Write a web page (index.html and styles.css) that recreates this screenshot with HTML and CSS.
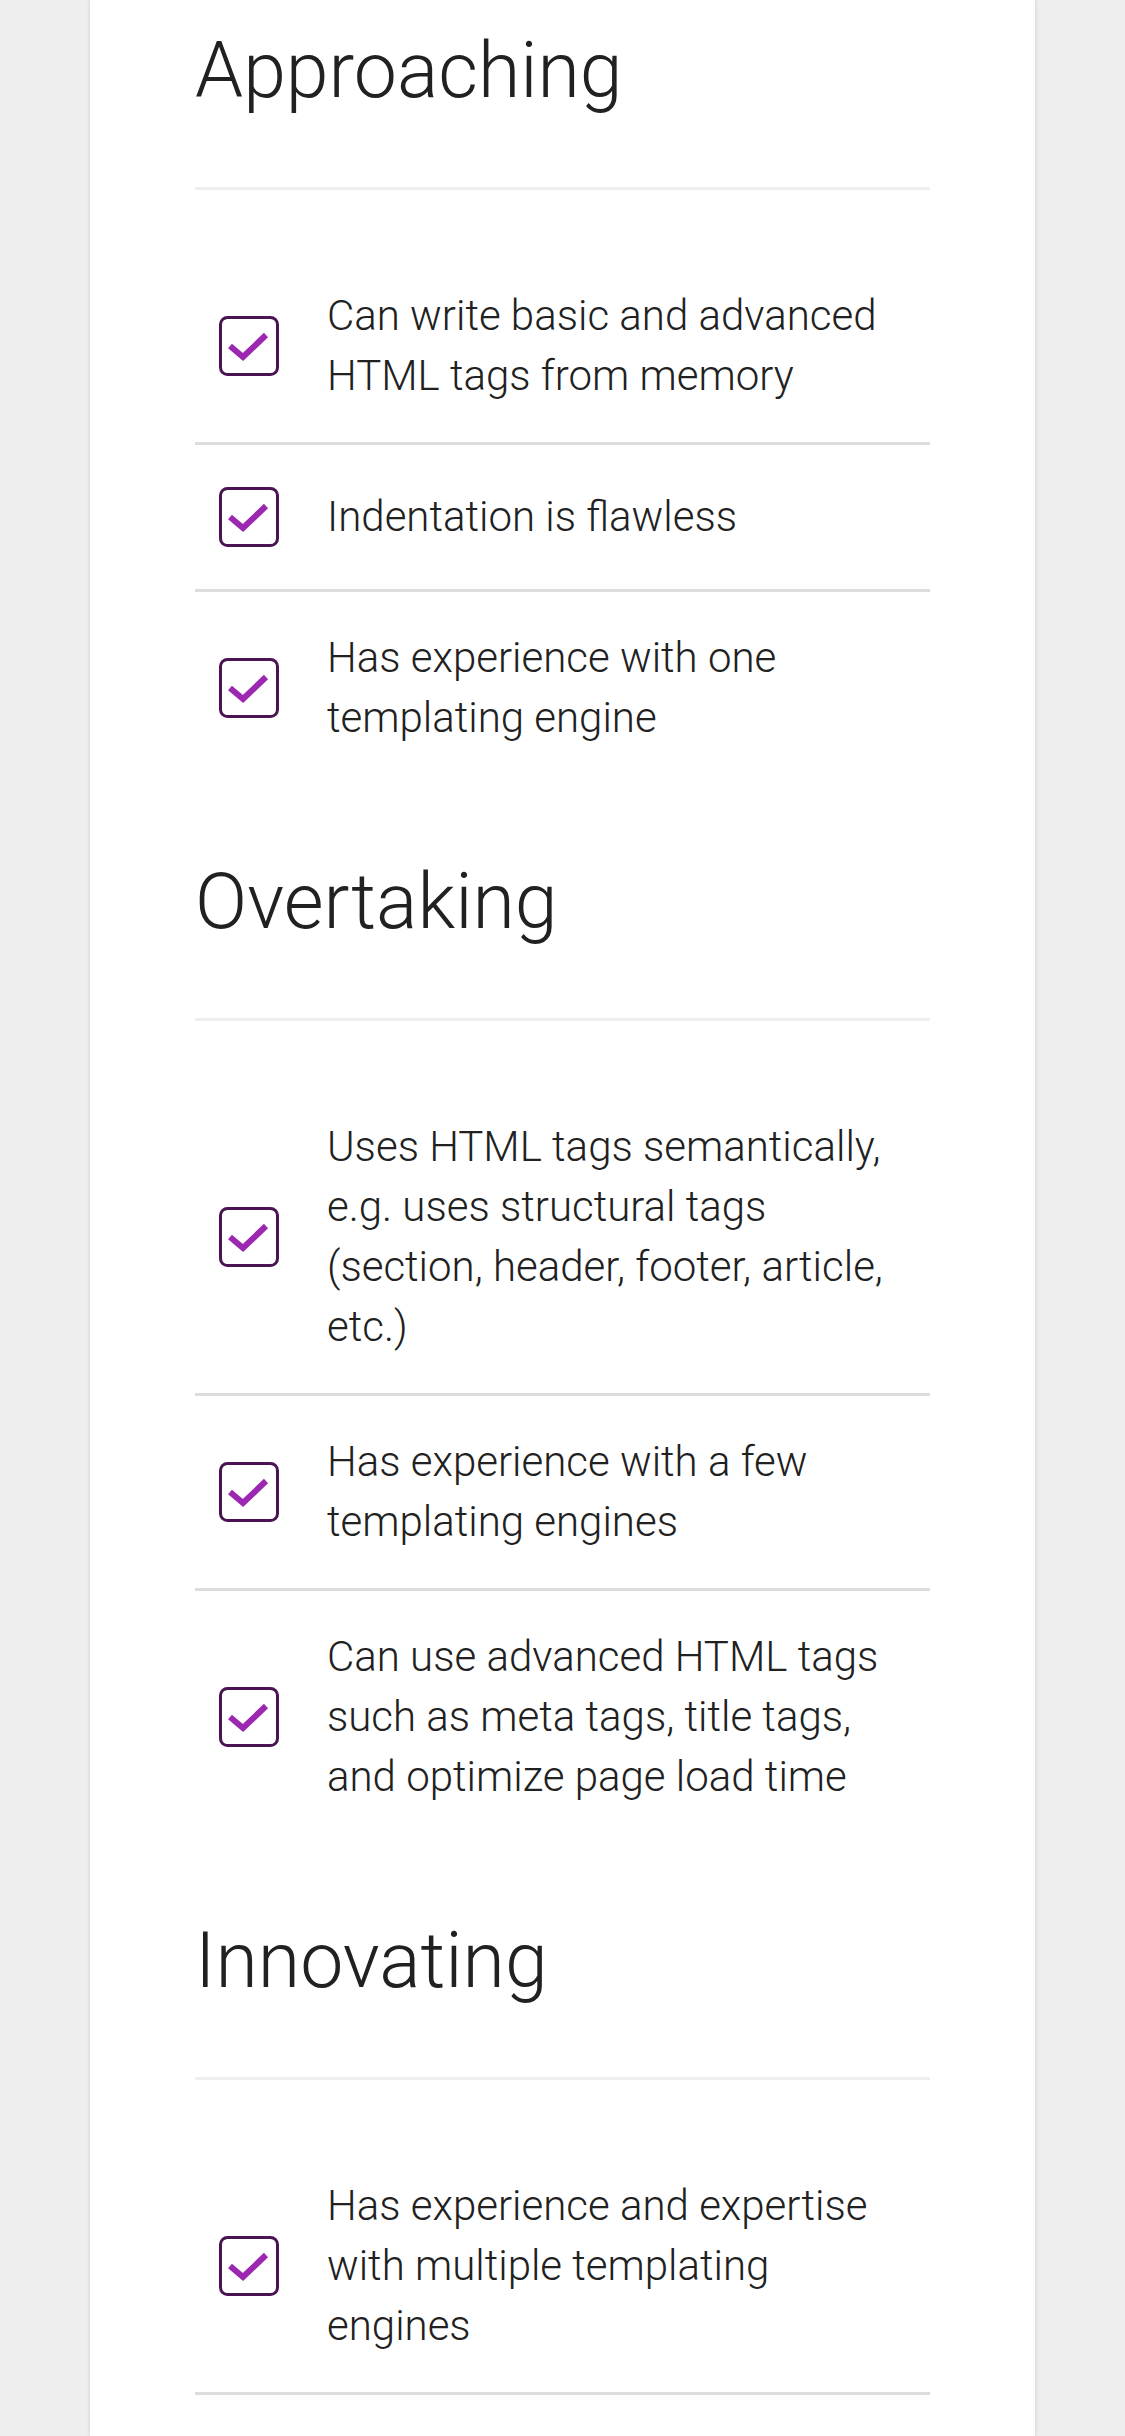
FILE: index.html
```html
<!DOCTYPE html>
<html lang="en">
<head>
<meta charset="utf-8">
<title>HTML skills</title>
<link rel="stylesheet" href="styles.css">
</head>
<body>
<main class="card">
  <section class="level">
    <h2 class="level-title">Approaching</h2>
    <ul class="skills">
      <li class="skill"><span class="check"><svg viewBox="0 0 60 60" width="60" height="60"><rect x="1.5" y="1.5" width="57" height="57" rx="7" ry="7" class="box"/><path d="M11 30 L24 41 L47 19" class="tick"/></svg></span><span class="skill-text">Can write basic and advanced HTML tags from memory</span></li>
      <li class="skill"><span class="check"><svg viewBox="0 0 60 60" width="60" height="60"><rect x="1.5" y="1.5" width="57" height="57" rx="7" ry="7" class="box"/><path d="M11 30 L24 41 L47 19" class="tick"/></svg></span><span class="skill-text">Indentation is flawless</span></li>
      <li class="skill"><span class="check"><svg viewBox="0 0 60 60" width="60" height="60"><rect x="1.5" y="1.5" width="57" height="57" rx="7" ry="7" class="box"/><path d="M11 30 L24 41 L47 19" class="tick"/></svg></span><span class="skill-text">Has experience with one templating engine</span></li>
    </ul>
  </section>
  <section class="level">
    <h2 class="level-title">Overtaking</h2>
    <ul class="skills">
      <li class="skill"><span class="check"><svg viewBox="0 0 60 60" width="60" height="60"><rect x="1.5" y="1.5" width="57" height="57" rx="7" ry="7" class="box"/><path d="M11 30 L24 41 L47 19" class="tick"/></svg></span><span class="skill-text">Uses HTML tags semantically, e.g. uses structural tags (section, header, footer, article, etc.)</span></li>
      <li class="skill"><span class="check"><svg viewBox="0 0 60 60" width="60" height="60"><rect x="1.5" y="1.5" width="57" height="57" rx="7" ry="7" class="box"/><path d="M11 30 L24 41 L47 19" class="tick"/></svg></span><span class="skill-text">Has experience with a few templating engines</span></li>
      <li class="skill"><span class="check"><svg viewBox="0 0 60 60" width="60" height="60"><rect x="1.5" y="1.5" width="57" height="57" rx="7" ry="7" class="box"/><path d="M11 30 L24 41 L47 19" class="tick"/></svg></span><span class="skill-text">Can use advanced HTML tags such as meta tags, title tags, and optimize page load time</span></li>
    </ul>
  </section>
  <section class="level">
    <h2 class="level-title">Innovating</h2>
    <ul class="skills skills-continued">
      <li class="skill"><span class="check"><svg viewBox="0 0 60 60" width="60" height="60"><rect x="1.5" y="1.5" width="57" height="57" rx="7" ry="7" class="box"/><path d="M11 30 L24 41 L47 19" class="tick"/></svg></span><span class="skill-text">Has experience and expertise with multiple templating engines</span></li>
    </ul>
  </section>
</main>
</body>
</html>
```
FILE: styles.css
```css
html, body {
  margin: 0;
  padding: 0;
}
body {
  background: #eeeeee;
  font-family: Roboto, "Liberation Sans", sans-serif;
  color: #212121;
}
.card {
  display: block;
  width: 945px;
  box-sizing: border-box;
  margin: 0 auto;
  min-height: 2436px;
  padding: 25px 105px 0;
  background: #ffffff;
  box-shadow: 0 0 4px rgba(0, 0, 0, 0.16);
}
.level + .level {
  margin-top: 72px;
}
.level-title {
  margin: 0;
  padding-bottom: 70px;
  border-bottom: 3px solid #eeeeee;
  font-size: 77px;
  line-height: 92px;
  font-weight: 300;
  color: #212121;
}
.skills {
  list-style: none;
  margin: 0;
  padding: 60px 0 0;
}
.skill {
  display: flex;
  align-items: center;
  padding: 36px 0;
  border-bottom: 3px solid #dddddd;
}
.skill:last-child {
  border-bottom: none;
}
.skills-continued .skill:last-child {
  border-bottom: 3px solid #dddddd;
}
.check {
  flex: none;
  display: block;
  width: 60px;
  height: 60px;
  margin: 6px 48px 6px 24px;
}
.check svg {
  display: block;
}
.box {
  fill: none;
  stroke: #4a1352;
  stroke-width: 3;
}
.tick {
  fill: none;
  stroke: #9c27b0;
  stroke-width: 6;
  stroke-linecap: butt;
  stroke-linejoin: miter;
}
.skill-text {
  flex: 1;
  padding-right: 30px;
  font-size: 42px;
  line-height: 60px;
  font-weight: 300;
  color: #212121;
}
```
